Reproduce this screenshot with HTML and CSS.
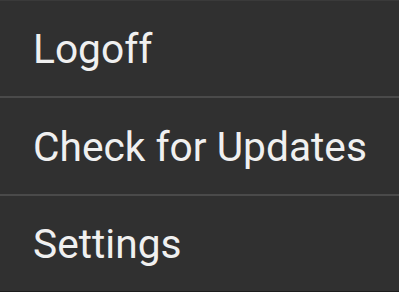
FILE: index.html
```html
<!DOCTYPE html>
<html>
<head>
<meta charset="utf-8">
<link rel="stylesheet" href="styles.css">
</head>
<body>
<div class="menu">
  <div class="item first">Logoff</div>
  <div class="divider"></div>
  <div class="item">Check for Updates</div>
  <div class="divider"></div>
  <div class="item last">Settings</div>
</div>
</body>
</html>
```
FILE: styles.css
```css
html, body {
  margin: 0;
  padding: 0;
  background: #ffffff;
}
.menu {
  width: 399px;
  height: 292px;
  background: #303030;
  border-top: 1px solid #3a3a3a;
  box-sizing: border-box;
  border-bottom: 1px solid #1c1c1c;
  display: flex;
  flex-direction: column;
}
.item {
  height: 96px;
  display: flex;
  align-items: center;
  padding-left: 33px;
  padding-top: 1px;
  font-family: Roboto, "Noto Sans", sans-serif;
  font-size: 40.7px;
  color: #f0f0f0;
  box-sizing: border-box;
}
.item.first {
  height: 95px;
  padding-top: 0;
}
.item.last {
  height: 94px;
}
.divider {
  height: 2px;
  background: #4a4a4a;
}
```
